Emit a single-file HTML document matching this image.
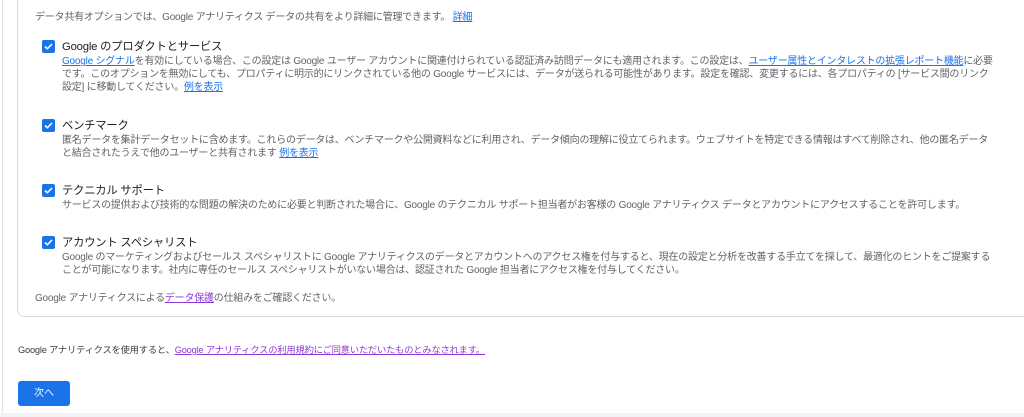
<!DOCTYPE html>
<html><head><meta charset="utf-8"><style>
body{margin:0;width:1024px;height:417px;background:#fff;overflow:hidden;position:relative;font-family:"Liberation Sans","Noto Sans CJK JP",sans-serif;color:#5f6368}
.outer{position:absolute;left:2px;top:0;width:1030px;height:414px;border-left:1px solid #e3e3e3}
.bottom{position:absolute;left:0;top:413px;width:1024px;height:4px;background:#f1f3f4}
.card{position:absolute;left:17px;top:-10px;width:1030px;height:325px;border:1px solid #dadce0;border-radius:8px}
.t{position:absolute;font-size:10px;line-height:13px;white-space:nowrap;letter-spacing:-0.22px}
a{color:#1a73e8;text-decoration:underline}
a.v{color:#8e3ad6}
.cb{position:absolute;left:42px;width:13px;height:13px;background:#1a73e8;border-radius:2px}
.cb svg{position:absolute;left:1px;top:1px}
.h{position:absolute;left:62px;font-size:11.3px;color:#202124;white-space:nowrap;letter-spacing:-0.2px}
.btn{position:absolute;left:18px;top:381px;width:52px;height:25px;background:#1a73e8;border-radius:3px;color:#fff;font-size:10px;line-height:25px;text-align:center}
</style></head><body>
<div class="outer"></div><div class="bottom"></div>
<div class="card"></div>
<div class="t" style="left:35px;top:11px">データ共有オプションでは、Google アナリティクス データの共有をより詳細に管理できます。 <a>詳細</a></div>

<div class="cb" style="top:40px"><svg width="11" height="11" viewBox="0 0 11 11"><path d="M2 5.5l2.3 2.3L9 3" stroke="#fff" stroke-width="1.6" fill="none"/></svg></div>
<div class="h" style="top:38px">Google のプロダクトとサービス</div>
<div class="t" style="left:62px;top:55px"><a>Google シグナル</a>を有効にしている場合、この設定は Google ユーザー アカウントに関連付けられている認証済み訪問データにも適用されます。この設定は、<a>ユーザー属性とインタレストの拡張レポート機能</a>に必要<br>です。このオプションを無効にしても、プロパティに明示的にリンクされている他の Google サービスには、データが送られる可能性があります。設定を確認、変更するには、各プロパティの [サービス間のリンク<br>設定] に移動してください。<a>例を表示</a></div>

<div class="cb" style="top:119px"><svg width="11" height="11" viewBox="0 0 11 11"><path d="M2 5.5l2.3 2.3L9 3" stroke="#fff" stroke-width="1.6" fill="none"/></svg></div>
<div class="h" style="top:117px">ベンチマーク</div>
<div class="t" style="left:62px;top:134px">匿名データを集計データセットに含めます。これらのデータは、ベンチマークや公開資料などに利用され、データ傾向の理解に役立てられます。ウェブサイトを特定できる情報はすべて削除され、他の匿名データ<br>と結合されたうえで他のユーザーと共有されます <a>例を表示</a></div>

<div class="cb" style="top:184px"><svg width="11" height="11" viewBox="0 0 11 11"><path d="M2 5.5l2.3 2.3L9 3" stroke="#fff" stroke-width="1.6" fill="none"/></svg></div>
<div class="h" style="top:182px">テクニカル サポート</div>
<div class="t" style="left:62px;top:199px">サービスの提供および技術的な問題の解決のために必要と判断された場合に、Google のテクニカル サポート担当者がお客様の Google アナリティクス データとアカウントにアクセスすることを許可します。</div>

<div class="cb" style="top:236px"><svg width="11" height="11" viewBox="0 0 11 11"><path d="M2 5.5l2.3 2.3L9 3" stroke="#fff" stroke-width="1.6" fill="none"/></svg></div>
<div class="h" style="top:234px">アカウント スペシャリスト</div>
<div class="t" style="left:62px;top:251px">Google のマーケティングおよびセールス スペシャリストに Google アナリティクスのデータとアカウントへのアクセス権を付与すると、現在の設定と分析を改善する手立てを探して、最適化のヒントをご提案する<br>ことが可能になります。社内に専任のセールス スペシャリストがいない場合は、認証された Google 担当者にアクセス権を付与してください。</div>

<div class="t" style="left:35px;top:292px">Google アナリティクスによる<a class="v">データ保護</a>の仕組みをご確認ください。</div>
<div class="t" style="left:18px;top:344px;color:#3c4043;font-size:9.3px">Google アナリティクスを使用すると、<a class="v">Google アナリティクスの利用規約にご同意いただいたものとみなされます。</a></div>
<div class="btn">次へ</div>
</body></html>
